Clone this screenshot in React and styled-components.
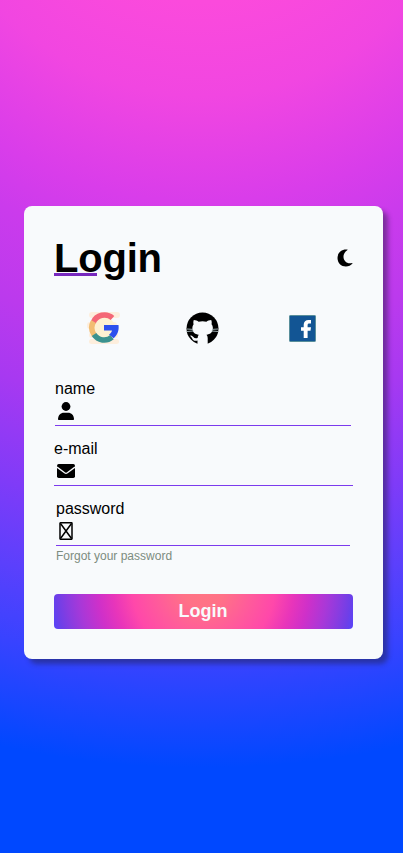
import React from 'react';
import styled, { createGlobalStyle } from 'styled-components';

const GlobalStyle = createGlobalStyle`
  * { box-sizing: border-box; margin: 0; padding: 0; }
  body { font-family: "Liberation Sans", Arial, sans-serif; color: #000; }
`;

const Page = styled.main`
  min-height: 853px;
  padding: 206px 20px 0 24px;
  background: radial-gradient(circle at 50% -20.71%,
    #fb4adc 17%, #f146e1 26%, #d93dea 36%, #cb3bec 41%, #bb3aed 49%,
    #a739f1 56%, #7f3bf8 65.5%, #5b40fc 73%, #3843ff 80%, #0048ff 90%);
`;

const Card = styled.form`
  display: flex;
  flex-direction: column;
  width: 359px;
  height: 453px;
  padding: 30px;
  border-radius: 8px;
  background: #f8fafc;
  box-shadow: 5px 5px 5px rgba(30, 30, 60, 0.45);
`;

const Header = styled.header`
  display: flex;
  align-items: center;
  justify-content: space-between;
  height: 44px;
`;

const Title = styled.h1`
  position: relative;
  font-size: 40px;
  line-height: 44px;
  letter-spacing: -0.2px;
  &::after {
    content: "";
    position: absolute;
    left: 0;
    top: 37px;
    width: 43px;
    height: 3px;
    background: #7728be;
  }
`;

const ThemeToggle = styled.button`
  display: flex;
  border: 0;
  background: none;
`;

const Socials = styled.nav`
  display: grid;
  grid-template-columns: repeat(3, 1fr);
  justify-items: center;
  align-items: center;
  height: 36px;
  margin: 30px 1px 0 0;
`;

const Fields = styled.section`
  display: flex;
  flex-direction: column;
  margin-top: 32px;
`;

const Field = styled.label`
  display: flex;
  flex-direction: column;
  height: 60px;
  margin: 0 ${(p) => p.$right}px 0 ${(p) => p.$left}px;
  font-size: 16px;
  line-height: 22px;
`;

const InputRow = styled.span`
  display: flex;
  align-items: center;
  height: 26px;
  padding: 0 0 3px ${(p) => p.$pad}px;
  border-bottom: 1px solid #7c3aed;
`;

const Forgot = styled.a`
  margin: -9px 0 0 2px;
  font-size: 12px;
  line-height: 14px;
  color: #7c8c80;
`;

const Submit = styled.button`
  height: 35px;
  margin-top: auto;
  padding-right: 1px;
  border: 0;
  border-radius: 4px;
  font: bold 18px "Liberation Sans", Arial, sans-serif;
  color: #f8fafc;
  background: radial-gradient(circle at 50% -20.71%,
    #ff7583 0, #ff7187 14%, #ff5c9a 30%, #ff48aa 46%, #e835ba 58%,
    #cf30c9 68%, #a838d8 80%, #8a3ce0 88%, #6d3fe8 95%, #5644fa 100%);
`;

const Moon = () => (
  <svg width="16" height="18" viewBox="0 0 16 18">
    <path d="M10.300.6C4.800-.1.500 3.800.500 9c0 5 3.800 8.500 8.400 8.500 2.700 0 5-1 6.500-2.900.3-.3 0-.7-.4-.5C6.800 15.900 3.200 6 10.200 1.200c.4-.2.500-.5.100-.6z" />
  </svg>
);

const Google = () => (
  <svg width="33" height="34" viewBox="0 0 33 34">
    <g fill="#fdeedd">
      <rect x="2" y="1" width="31" height="6" rx="3" />
      <rect x="0" y="11" width="30" height="7" rx="3" />
      <rect x="2" y="21" width="29" height="6" rx="3" />
      <rect x="2" y="28" width="30" height="5" rx="2.5" />
    </g>
    <circle cx="17" cy="17" r="11" fill="#fdf1d2" />
    <g fill="none" strokeWidth="5.5">
      <path d="M6.2 11.5A12.2 12.2 0 0 1 25.5 7" stroke="#f46776" />
      <path d="M7.2 23.8A12.2 12.2 0 0 1 6.5 10.5" stroke="#f2bd72" />
      <path d="M25 26.2A12.2 12.2 0 0 1 7 23.6" stroke="#3b928f" />
    </g>
    <path d="M17 14h14.5c.8 6-1.4 10.2-4.800 13.200L22 23.400c1.600-1 2.600-2.400 3-4h-8z" fill="#2c50ee" />
  </svg>
);

const Github = () => (
  <svg width="33" height="33" viewBox="0 0 33 33">
    <circle cx="16.5" cy="16.5" r="16" />
    <path d="M7.8 8c2 0 3.6.8 4.8 1.7a18 18 0 0 1 7.8 0C21.6 8.8 23.2 8 25.2 8c.7 1.7.6 3.2.3 4.3 1.1 1.3 1.5 2.8 1.3 4.700-.4 3.700-2.600 5.200-6.300 5.700.8.9 1.200 1.900 1.200 3.200v6.200l-2 1h-6.400l-1.800-1v-3.600c-3.100.6-4.500-.3-5.300-2.100-.4-.9-1-1.500-1.700-2.100-.7-.7.1-1 .8-.8 2.300.6 2.300 3.700 6.300 2.500.1-1.300.5-2.400 1.100-3.300-3.700-.5-5.900-2-6.300-5.700-.2-1.900.2-3.400 1.200-4.700-.3-1.100-.5-2.600.2-4.300z" fill="#f8fafc" />
    <path d="M1 17l6 .4M1 19.5l6.500-.5M32 17l-6 .4M32 19.5l-6.500-.5" stroke="#a9b9bb" strokeWidth=".9" />
  </svg>
);

const Facebook = () => (
  <svg width="27" height="27" viewBox="0 0 27 27">
    <rect x=".5" y=".5" width="26" height="26" rx=".7" fill="#125594" stroke="#588e9b" />
    <path d="M14.7 23v-7.2H12v-3.500h2.700V9.700c0-3.300 2-4.800 4.800-4.800H22v3.600h-1.700c-1.200 0-1.700.5-1.700 1.700v2.100H22l-.5 3.500h-2.900V23z" fill="#fff" />
  </svg>
);

const Person = () => (
  <svg width="16" height="18" viewBox="0 0 16 18">
    <circle cx="8" cy="4.5" r="4.4" />
    <path d="M0 17.2C.2 13 2.5 10.7 6 10.7h4c3.5 0 5.8 2.3 6 6.5 0 .5-.3.8-.8.8H.8c-.5 0-.8-.3-.8-.8z" />
  </svg>
);

const Envelope = () => (
  <svg width="18" height="14" viewBox="0 0 18 14">
    <rect width="18" height="14" rx="1.7" />
    <path d="M0 3.1l7.6 5.7q1.4 1 2.8 0L18 3.1" fill="none" stroke="#f8fafc" strokeWidth="1.3" />
  </svg>
);

const MissingGlyph = () => (
  <svg width="14" height="18" viewBox="0 0 14 18" fill="none" stroke="#000" strokeWidth="1.5">
    <rect x="1" y=".8" width="12" height="16.4" rx=".4" />
    <path d="M1.5 1.5l11 15M12.5 1.5l-11 15" />
  </svg>
);

const fields = [
  { label: 'name', Icon: Person, left: 1, right: 2, pad: 3 },
  { label: 'e-mail', Icon: Envelope, left: 0, right: 0, pad: 3 },
  { label: 'password', Icon: MissingGlyph, left: 2, right: 3, pad: 2.5 },
];

export default function App() {
  return (
    <>
      <GlobalStyle />
      <Page>
        <Card>
          <Header>
            <Title>Login</Title>
            <ThemeToggle type="button" aria-label="Dark mode"><Moon /></ThemeToggle>
          </Header>
          <Socials>
            <Google />
            <Github />
            <Facebook />
          </Socials>
          <Fields>
            {fields.map(({ label, Icon, left, right, pad }) => (
              <Field key={label} $left={left} $right={right}>
                {label}
                <InputRow $pad={pad}><Icon /></InputRow>
              </Field>
            ))}
            <Forgot>Forgot your password</Forgot>
          </Fields>
          <Submit type="button">Login</Submit>
        </Card>
      </Page>
    </>
  );
}
